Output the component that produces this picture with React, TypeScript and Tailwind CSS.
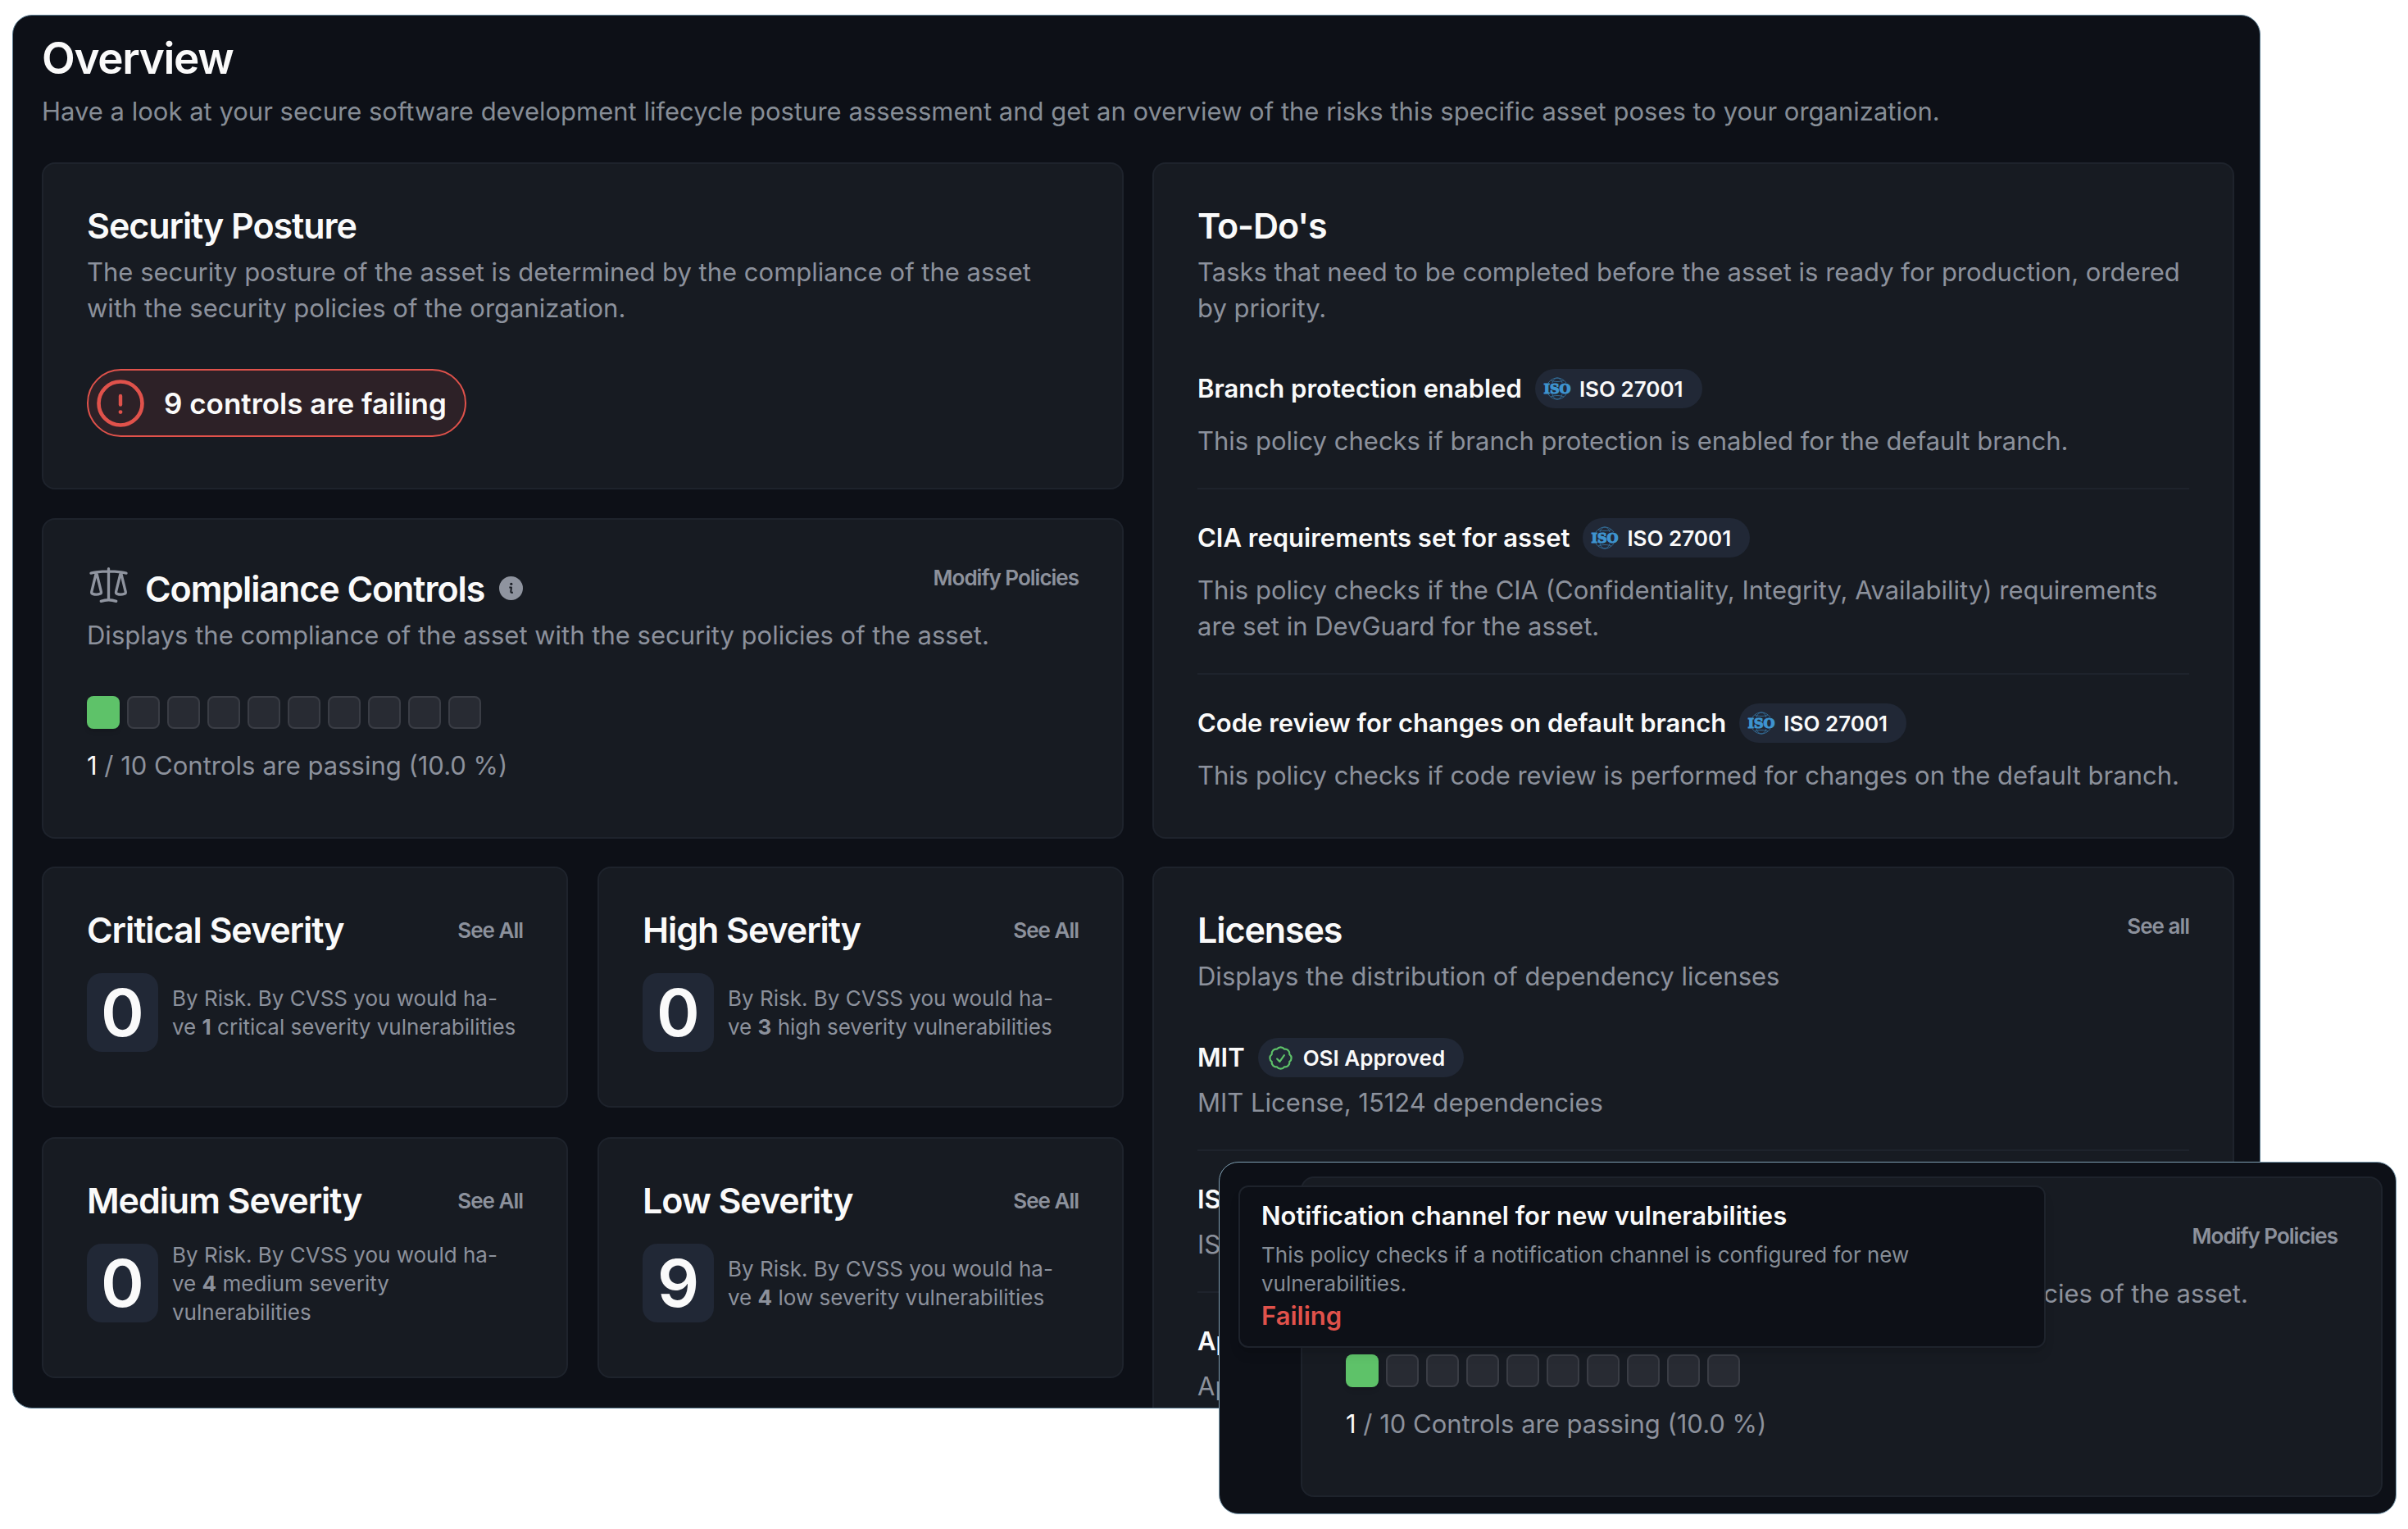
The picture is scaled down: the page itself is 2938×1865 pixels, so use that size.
import type { ReactNode } from "react";

const CONTROL_COUNT = 10;
const PASSING_COUNT = 1;

function ScaleIcon() {
  return (
    <svg viewBox="0 0 24 24" fill="none" stroke="currentColor" strokeWidth="1.5" strokeLinecap="round" strokeLinejoin="round" className="size-[53px] shrink-0 text-[#8f949f]" aria-hidden="true">
      <path d="M12 3v17.25m0 0c-1.472 0-2.882.265-4.185.75M12 20.25c1.472 0 2.882.265 4.185.75M18.75 4.97A48.416 48.416 0 0 0 12 4.5c-2.291 0-4.545.16-6.75.47m13.5 0c1.01.143 2.01.317 3 .52m-3-.52 2.62 10.726c.122.499-.106 1.028-.589 1.202a5.988 5.988 0 0 1-2.031.352 5.988 5.988 0 0 1-2.031-.352c-.483-.174-.711-.703-.59-1.202L18.75 4.971Zm-16.5.52c.99-.203 1.99-.377 3-.52m0 0 2.62 10.726c.122.499-.106 1.028-.589 1.202a5.989 5.989 0 0 1-2.031.352 5.989 5.989 0 0 1-2.031-.352c-.483-.174-.711-.703-.59-1.202L5.25 4.971Z" />
    </svg>
  );
}

function InfoIcon() {
  return (
    <svg viewBox="0 0 30 30" className="size-[29px]" aria-hidden="true">
      <circle cx="15" cy="15" r="15" fill="#8f949f" />
      <circle cx="15.3" cy="9.6" r="1.6" fill="#171b22" />
      <path d="M12.8 14h2.6l-.6 5.2c0 1.4 1 1.6 2.6 1" stroke="#171b22" strokeWidth="2.1" fill="none" strokeLinejoin="round" />
    </svg>
  );
}

function AlertIcon() {
  return (
    <svg viewBox="0 0 58 58" fill="none" stroke="#e0524b" className="size-[58px] shrink-0" aria-hidden="true">
      <circle cx="29" cy="29" r="26.5" strokeWidth="4.6" />
      <path d="M29 20v10.5" strokeWidth="4.4" strokeLinecap="round" />
      <circle cx="29" cy="39.6" r="2.4" fill="#e0524b" stroke="none" />
    </svg>
  );
}

function ApprovedIcon() {
  return (
    <svg viewBox="0 0 24 24" fill="none" stroke="#5ec269" strokeWidth="1.5" strokeLinecap="round" strokeLinejoin="round" className="size-[35px] shrink-0" aria-hidden="true">
      <path d="M9 12.75 11.25 15 15 9.75M21 12c0 1.268-.63 2.39-1.593 3.068a3.745 3.745 0 0 1-1.043 3.296 3.745 3.745 0 0 1-3.296 1.043A3.745 3.745 0 0 1 12 21c-1.268 0-2.39-.63-3.068-1.593a3.746 3.746 0 0 1-3.296-1.043 3.745 3.745 0 0 1-1.043-3.296A3.745 3.745 0 0 1 3 12c0-1.268.63-2.39 1.593-3.068a3.745 3.745 0 0 1 1.043-3.296 3.746 3.746 0 0 1 3.296-1.043A3.746 3.746 0 0 1 12 3c1.268 0 2.39.63 3.068 1.593a3.746 3.746 0 0 1 3.296 1.043 3.746 3.746 0 0 1 1.043 3.296A3.745 3.745 0 0 1 21 12Z" />
    </svg>
  );
}

function IsoLogo() {
  return (
    <svg viewBox="0 0 34 28" className="h-7 w-[34px] shrink-0" aria-hidden="true">
      <g fill="none" stroke="#3e94cf" strokeWidth="0.8" opacity="0.75">
        <path d="M6 7C9 3 13 1 17 1s8 2 11 6" />
        <path d="M6 21c3 4 7 6 11 6s8-2 11-6" />
        <path d="M11 7c1-4 4-6 6-6s5 2 6 6M11 21c1 4 4 6 6 6s5-2 6-6" />
        <path d="M9 4c4 2 12 2 16 0M9 24c4-2 12-2 16 0" />
      </g>
      <text x="17" y="20" textAnchor="middle" fill="#3e94cf" stroke="#3e94cf" strokeWidth="1.2" className="font-['DejaVu_Serif',serif] text-[16px] font-bold">
        ISO
      </text>
    </svg>
  );
}

function Card({ children, className = "" }: { children: ReactNode; className?: string }) {
  return (
    <section className={`rounded-2xl border-2 border-[#1e232c] bg-[#171b22] p-[53px] ${className}`}>{children}</section>
  );
}

function Title({ children }: { children: ReactNode }) {
  return <h2 className="text-[43px] leading-[44px] font-semibold tracking-tight text-[#fafafa]">{children}</h2>;
}

function Description({ children }: { children: ReactNode }) {
  return <p className="text-[31px] leading-[44px] text-[#8c919c]">{children}</p>;
}

function CardLink({ children }: { children: ReactNode }) {
  return (
    <a href="#" className="shrink-0 text-[26px] leading-[35px] font-semibold tracking-[-1px] text-[#8c919c]">
      {children}
    </a>
  );
}

function Badge({ icon, children }: { icon: ReactNode; children: ReactNode }) {
  return (
    <span className="flex h-12 items-center gap-[10px] rounded-full bg-[#212836] pr-[23px] pl-[10px] text-[26px] leading-[35px] font-semibold text-[#fafafa]">
      {icon}
      {children}
    </span>
  );
}

function ComplianceCard() {
  return (
    <Card className="pb-[65px]">
      <div className="flex items-start justify-between">
        <div className="flex items-end gap-[18px]">
          <ScaleIcon />
          <Title>Compliance Controls</Title>
          <button type="button" aria-label="About compliance controls" className="mb-2">
            <InfoIcon />
          </button>
        </div>
        <CardLink>Modify Policies</CardLink>
      </div>
      <div className="mt-[13px]">
        <Description>Displays the compliance of the asset with the security policies of the asset.</Description>
      </div>
      <div className="mt-[52px] flex gap-[9px]">
        {Array.from({ length: CONTROL_COUNT }, (_, i) => (
          <div
            key={i}
            className={
              i < PASSING_COUNT
                ? "size-10 rounded-lg bg-[#5ec269] shadow-md"
                : "size-10 rounded-lg border-2 border-[#3a3d45] bg-[#282b33]"
            }
          />
        ))}
      </div>
      <div className="mt-[23px]">
        <Description>
          <span className="text-[#fafafa]">{PASSING_COUNT}</span> / {CONTROL_COUNT} Controls are passing (10.0 %)
        </Description>
      </div>
    </Card>
  );
}

const todos = [
  { title: "Branch protection enabled", text: "This policy checks if branch protection is enabled for the default branch." },
  {
    title: "CIA requirements set for asset",
    text: "This policy checks if the CIA (Confidentiality, Integrity, Availability) requirements are set in DevGuard for the asset.",
  },
  {
    title: "Code review for changes on default branch",
    text: "This policy checks if code review is performed for changes on the default branch.",
  },
];

const severities = [
  { name: "Critical", count: 0, cvss: 1, label: "critical" },
  { name: "High", count: 0, cvss: 3, label: "high" },
  { name: "Medium", count: 0, cvss: 4, label: "medium" },
  { name: "Low", count: 9, cvss: 4, label: "low" },
];

const licenses = [
  { id: "MIT", text: "MIT License, 15124 dependencies" },
  { id: "ISC", text: "ISC License, 1093 dependencies" },
  { id: "Apache-2.0", text: "Apache License 2.0, 612 dependencies" },
];

function SeverityCard({ name, count, cvss, label }: (typeof severities)[number]) {
  return (
    <Card className="pb-[61px]">
      <div className="flex items-center justify-between">
        <Title>{name} Severity</Title>
        <CardLink>See All</CardLink>
      </div>
      <div className="mt-[26px] flex min-h-[106px] items-center gap-[17px]">
        <div className="flex h-24 w-[87px] shrink-0 items-center justify-center rounded-[18px] bg-[#212836] text-[80px] leading-none font-semibold text-[#fafafa]">
          {count}
        </div>
        <p className="text-[26px] leading-[35px] text-[#8c919c]">
          By Risk. By CVSS you would ha-
          <br />
          ve <b className="font-bold">{cvss}</b> {label} severity vulnerabilities
        </p>
      </div>
    </Card>
  );
}

export default function App() {
  return (
    <div className="relative min-h-screen bg-white pt-[18px] pr-[180px] pl-[15px] font-['Inter',sans-serif] [font-optical-sizing:none]">
      <main className="max-h-[1700px] overflow-hidden rounded-3xl border border-[#5c7d92] bg-[#0d1017] pt-[23px] pr-[31px] pl-[35px]">
        <h1 className="text-[53px] leading-[58px] font-semibold tracking-tight text-[#fafafa]">Overview</h1>
        <p className="mt-[14px] text-[31px] leading-[44px] text-[#868d96]">
          Have a look at your secure software development lifecycle posture assessment and get an overview of the risks
          this specific asset poses to your organization.
        </p>

        <div className="mt-10 grid grid-cols-2 gap-x-[35px] gap-y-[34px]">
          <div className="flex flex-col gap-[35px]">
            <Card>
              <Title>Security Posture</Title>
              <div className="mt-[13px]">
                <Description>
                  The security posture of the asset is determined by the compliance of the asset with the security
                  policies of the organization.
                </Description>
              </div>
              <div className="mt-[52px] mb-[9px] flex">
                <div className="flex h-[83px] items-center gap-6 rounded-full border-2 border-[#e0524b] bg-[#2d2127] pr-[22px] pl-[10px] text-[35px] leading-[44px] font-semibold text-[#fafafa]">
                  <AlertIcon />9 controls are failing
                </div>
              </div>
            </Card>
            <ComplianceCard />
          </div>

          <Card>
            <Title>To-Do's</Title>
            <div className="mt-[13px]">
              <Description>
                Tasks that need to be completed before the asset is ready for production, ordered by priority.
              </Description>
            </div>
            <ul className="mt-[52px] divide-y-2 divide-[#1e232c]">
              {todos.map((todo) => (
                <li key={todo.title} className="py-[35px] first:pt-0 last:pb-0">
                  <div className="mb-[18px] flex items-center gap-4">
                    <h3 className="text-[31px] leading-[44px] font-semibold text-[#fafafa]">{todo.title}</h3>
                    <Badge icon={<IsoLogo />}>ISO 27001</Badge>
                  </div>
                  <Description>{todo.text}</Description>
                </li>
              ))}
            </ul>
          </Card>

          <div className="grid grid-cols-2 gap-9 self-start">
            {severities.map((severity) => (
              <SeverityCard key={severity.name} {...severity} />
            ))}
          </div>

          <Card>
            <div className="flex items-start justify-between">
              <Title>Licenses</Title>
              <CardLink>See all</CardLink>
            </div>
            <div className="mt-[13px]">
              <Description>Displays the distribution of dependency licenses</Description>
            </div>
            <ul className="mt-[53px] divide-y-2 divide-[#1e232c]">
              {licenses.map((license) => (
                <li key={license.id} className="py-[35px] first:pt-0 last:pb-0">
                  <div className="mb-[9px] flex items-center gap-4">
                    <h3 className="text-[31px] leading-[44px] font-semibold text-[#fafafa]">{license.id}</h3>
                    <Badge icon={<ApprovedIcon />}>OSI Approved</Badge>
                  </div>
                  <Description>{license.text}</Description>
                </li>
              ))}
            </ul>
          </Card>
        </div>
      </main>

      <aside className="absolute top-[1417px] right-[14px] w-[1437px] rounded-3xl border border-[#7f9fb2] bg-[#0d1017] pt-[17px] pr-4 pb-[20px] pl-[99px]">
        <ComplianceCard />
        <div
          role="tooltip"
          className="absolute top-7 left-[23px] w-[985px] rounded-xl border-2 border-[#1e232c] bg-[#0d1017] px-[26px] pt-[13px] pb-[15px] shadow-lg"
        >
          <h3 className="text-[31px] leading-[44px] font-semibold text-[#fafafa]">
            Notification channel for new vulnerabilities
          </h3>
          <p className="mt-2 text-[26px] leading-[35px] text-[#868d96]">
            This policy checks if a notification channel is configured for new vulnerabilities.
          </p>
          <p className="text-[31px] leading-[44px] font-semibold text-[#e0524b]">Failing</p>
        </div>
      </aside>
    </div>
  );
}
